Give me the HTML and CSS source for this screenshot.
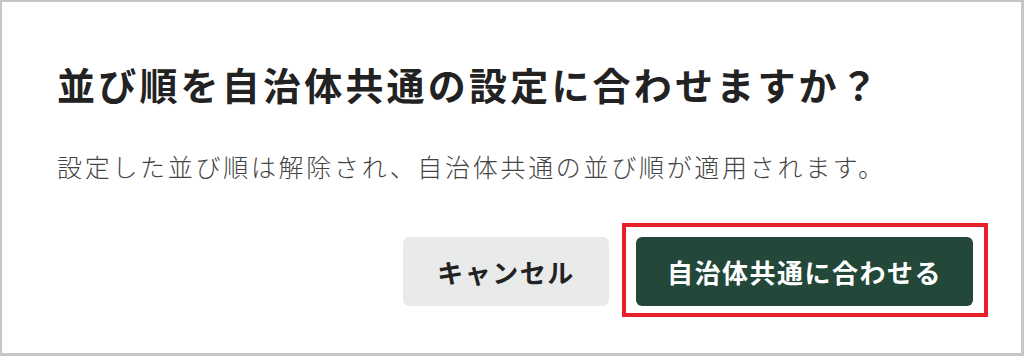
FILE: index.html
```html
<!DOCTYPE html>
<html lang="ja">
<head>
<meta charset="utf-8">
<link rel="stylesheet" href="styles.css">
</head>
<body>
<div class="frame">
  <div class="dialog">
    <h1 class="title">並び順を自治体共通の設定に合わせますか？</h1>
    <p class="message">設定した並び順は解除され、自治体共通の並び順が適用されます。</p>
    <div class="actions">
      <button class="btn btn-cancel">キャンセル</button>
      <div class="highlight">
        <button class="btn btn-primary">自治体共通に合わせる</button>
      </div>
    </div>
  </div>
</div>
</body>
</html>
```
FILE: styles.css
```css
* { box-sizing: border-box; }
html, body { margin: 0; padding: 0; background: #ffffff; }
body { font-family: "Noto Sans CJK JP", "Noto Sans", sans-serif; }
.frame {
  width: 1024px;
  height: 356px;
  border-style: solid;
  border-color: #c6c6c6;
  border-width: 2px 3px 3px 2px;
  background: #ffffff;
  overflow: hidden;
}
.dialog {
  padding: 54px 33px 0 55px;
}
.title {
  margin: 0;
  font-size: 38px;
  line-height: 56px;
  font-weight: 700;
  letter-spacing: 3.2px;
  color: #222222;
}
.message {
  margin: 36px 0 0 0;
  font-size: 25px;
  line-height: 36px;
  font-weight: 300;
  letter-spacing: 2.7px;
  color: #444444;
}
.actions {
  display: flex;
  justify-content: flex-end;
  align-items: flex-start;
  margin-top: 39px;
}
.btn {
  font-family: inherit;
  border: none;
  border-radius: 6px;
  font-size: 26px;
  font-weight: 700;
  letter-spacing: 1.5px;
  height: 69px;
  cursor: pointer;
}
.btn-cancel {
  width: 206px;
  margin-top: 14px;
  margin-right: 13px;
  background: #e9ebea;
  color: #222222;
}
.highlight {
  border: 4px solid #e8202a;
  padding: 10px 11px 7px 10px;
}
.btn-primary {
  display: block;
  width: 337px;
  background: #23483a;
  color: #ffffff;
}
```
